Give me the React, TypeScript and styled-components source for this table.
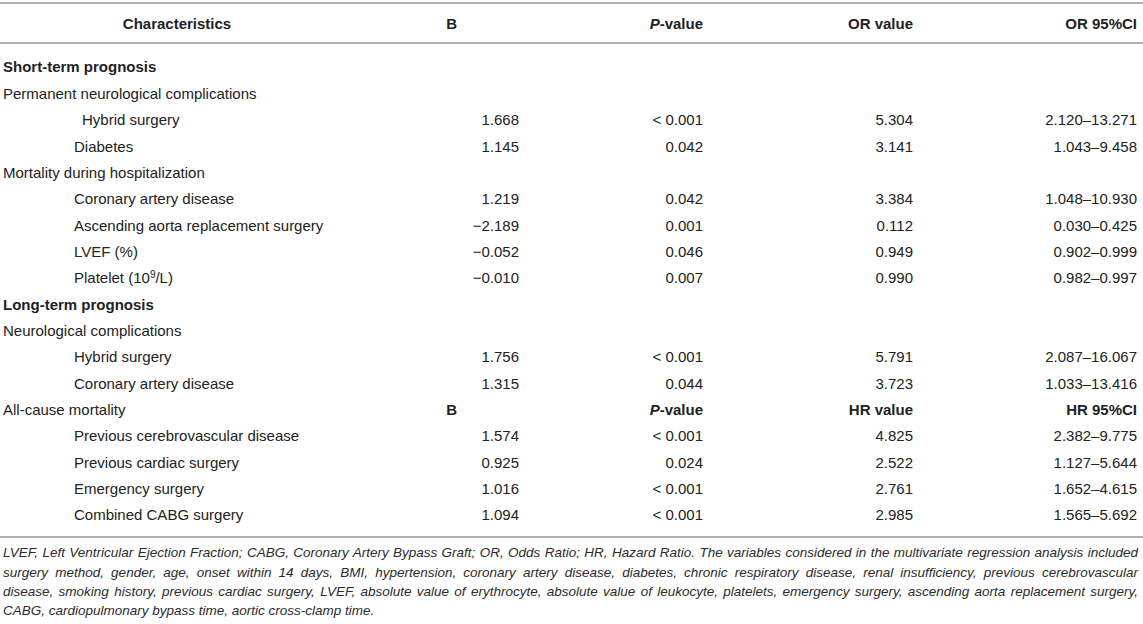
import React from "react";
import styled, { createGlobalStyle } from "styled-components";

const Global = createGlobalStyle`
  html, body { margin: 0; padding: 0; background: #fff; }
  body { font-family: "Liberation Sans", Arial, Helvetica, sans-serif; color: #222; }
`;

const COLS = "354px 165px 184px 210px 1fr";

const Page = styled.div`
  width: 1143px;
  padding-top: 2px;
  box-sizing: border-box;
`;

const Table = styled.div`
  display: flex;
  flex-direction: column;
  font-size: 15px;
  color: #222;
`;

const HeadRow = styled.div`
  display: grid;
  grid-template-columns: ${COLS};
  height: 38px;
  align-items: center;
  border-top: 2px solid #b3b3b3;
  border-bottom: 2px solid #b3b3b3;
`;

const Body = styled.div`
  display: flex;
  flex-direction: column;
  padding: 9.8px 0 8.2px;
  border-bottom: 2px solid #b3b3b3;
`;

const Row = styled.div`
  display: grid;
  grid-template-columns: ${COLS};
  height: 26.35px;
  align-items: center;
  white-space: nowrap;
`;

const Cell = styled.div<{ $align?: "left" | "right" | "center"; $indent?: number; $padR?: number; $bold?: boolean }>`
  text-align: ${(p) => p.$align || "right"};
  padding-left: ${(p) => p.$indent ?? 0}px;
  padding-right: ${(p) => p.$padR ?? 0}px;
  font-weight: ${(p) => (p.$bold ? "bold" : "normal")};
`;

const Sup = styled.sup`
  font-size: 10px;
  vertical-align: 5px;
  line-height: 0;
`;

const Footnote = styled.div`
  margin-top: 5px;
  padding: 0 5px 0 3px;
  font-size: 13.5px;
  line-height: 19.4px;
  font-style: italic;
  color: #2b2b2b;
`;

const FootLine = styled.span<{ $last?: boolean }>`
  display: block;
  white-space: nowrap;
  text-align: ${(p) => (p.$last ? "left" : "justify")};
  text-align-last: ${(p) => (p.$last ? "left" : "justify")};
`;

type Item = { kind: "item"; label: React.ReactNode; indent: number; v: [string, string, string, string] };
type Line =
  | { kind: "section"; label: string }
  | { kind: "group"; label: string; sub?: boolean }
  | Item;

const rows: Line[] = [
  { kind: "section", label: "Short-term prognosis" },
  { kind: "group", label: "Permanent neurological complications" },
  { kind: "item", label: "Hybrid surgery", indent: 82, v: ["1.668", "< 0.001", "5.304", "2.120–13.271"] },
  { kind: "item", label: "Diabetes", indent: 74, v: ["1.145", "0.042", "3.141", "1.043–9.458"] },
  { kind: "group", label: "Mortality during hospitalization" },
  { kind: "item", label: "Coronary artery disease", indent: 74, v: ["1.219", "0.042", "3.384", "1.048–10.930"] },
  { kind: "item", label: "Ascending aorta replacement surgery", indent: 74, v: ["−2.189", "0.001", "0.112", "0.030–0.425"] },
  { kind: "item", label: "LVEF (%)", indent: 74, v: ["−0.052", "0.046", "0.949", "0.902–0.999"] },
  {
    kind: "item",
    label: (
      <>
        Platelet (10<Sup>9</Sup>/L)
      </>
    ),
    indent: 74,
    v: ["−0.010", "0.007", "0.990", "0.982–0.997"],
  },
  { kind: "section", label: "Long-term prognosis" },
  { kind: "group", label: "Neurological complications" },
  { kind: "item", label: "Hybrid surgery", indent: 74, v: ["1.756", "< 0.001", "5.791", "2.087–16.067"] },
  { kind: "item", label: "Coronary artery disease", indent: 74, v: ["1.315", "0.044", "3.723", "1.033–13.416"] },
  { kind: "group", label: "All-cause mortality", sub: true },
  { kind: "item", label: "Previous cerebrovascular disease", indent: 74, v: ["1.574", "< 0.001", "4.825", "2.382–9.775"] },
  { kind: "item", label: "Previous cardiac surgery", indent: 74, v: ["0.925", "0.024", "2.522", "1.127–5.644"] },
  { kind: "item", label: "Emergency surgery", indent: 74, v: ["1.016", "< 0.001", "2.761", "1.652–4.615"] },
  { kind: "item", label: "Combined CABG surgery", indent: 74, v: ["1.094", "< 0.001", "2.985", "1.565–5.692"] },
];

const HeadCells: React.FC<{ kind: "OR" | "HR" }> = ({ kind }) => (
  <>
    <Cell $align="right" $padR={62} $bold>B</Cell>
    <Cell $align="right" $bold>
      <i>P</i>-value
    </Cell>
    <Cell $align="right" $bold>{kind} value</Cell>
    <Cell $align="right" $padR={6} $bold>{kind} 95%CI</Cell>
  </>
);

const footLines = [
  "LVEF, Left Ventricular Ejection Fraction; CABG, Coronary Artery Bypass Graft; OR, Odds Ratio; HR, Hazard Ratio. The variables considered in the multivariate regression analysis included",
  "surgery method, gender, age, onset within 14 days, BMI, hypertension, coronary artery disease, diabetes, chronic respiratory disease, renal insufficiency, previous cerebrovascular",
  "disease, smoking history, previous cardiac surgery, LVEF, absolute value of erythrocyte, absolute value of leukocyte, platelets, emergency surgery, ascending aorta replacement surgery,",
  "CABG, cardiopulmonary bypass time, aortic cross-clamp time.",
];

export default function App() {
  return (
    <Page>
      <Global />
      <Table>
        <HeadRow>
          <Cell $align="center" $bold>Characteristics</Cell>
          <HeadCells kind="OR" />
        </HeadRow>
        <Body>
          {rows.map((r, i) => {
            if (r.kind === "section")
              return (
                <Row key={i}>
                  <Cell $align="left" $indent={3} $bold>{r.label}</Cell>
                </Row>
              );
            if (r.kind === "group")
              return (
                <Row key={i}>
                  <Cell $align="left" $indent={3}>{r.label}</Cell>
                  {r.sub && <HeadCells kind="HR" />}
                </Row>
              );
            return (
              <Row key={i}>
                <Cell $align="left" $indent={r.indent}>{r.label}</Cell>
                <Cell>{r.v[0]}</Cell>
                <Cell>{r.v[1]}</Cell>
                <Cell>{r.v[2]}</Cell>
                <Cell $padR={6}>{r.v[3]}</Cell>
              </Row>
            );
          })}
        </Body>
      </Table>
      <Footnote>
        {footLines.map((l, i) => (
          <FootLine key={i} $last={i === footLines.length - 1}>
            {l}
          </FootLine>
        ))}
      </Footnote>
    </Page>
  );
}
